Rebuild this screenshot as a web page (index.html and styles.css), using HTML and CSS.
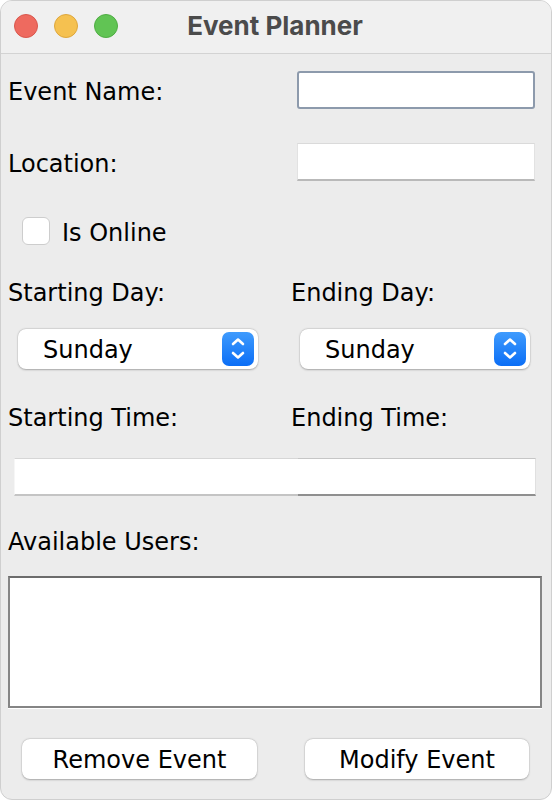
FILE: index.html
```html
<!DOCTYPE html>
<html>
<head>
<meta charset="utf-8">
<link rel="stylesheet" href="styles.css">
</head>
<body>
<div class="window">
  <div class="titlebar">
    <div class="lights">
      <span class="light red"></span>
      <span class="light yellow"></span>
      <span class="light green"></span>
    </div>
    <div class="title">Event Planner</div>
  </div>
  <div class="content">
    <div class="row row-name">
      <div class="label">Event Name:</div>
      <div class="field focused"></div>
    </div>
    <div class="row row-loc">
      <div class="label">Location:</div>
      <div class="field plain"></div>
    </div>
    <div class="row row-check">
      <span class="checkbox"></span>
      <span class="label">Is Online</span>
    </div>
    <div class="row row-labels1">
      <div class="label">Starting Day:</div>
      <div class="label right-label">Ending Day:</div>
    </div>
    <div class="row row-selects">
      <div class="select sel-left">
        <span class="sel-text">Sunday</span>
        <span class="stepper"><svg width="32" height="34" viewBox="0 0 32 34"><path d="M11 12 L16 7.5 L21 12 M11 21 L16 25.5 L21 21" fill="none" stroke="#fff" stroke-width="2.6" stroke-linecap="round" stroke-linejoin="round"/></svg></span>
      </div>
      <div class="select sel-right">
        <span class="sel-text">Sunday</span>
        <span class="stepper"><svg width="32" height="34" viewBox="0 0 32 34"><path d="M11 12 L16 7.5 L21 12 M11 21 L16 25.5 L21 21" fill="none" stroke="#fff" stroke-width="2.6" stroke-linecap="round" stroke-linejoin="round"/></svg></span>
      </div>
    </div>
    <div class="row row-labels2">
      <div class="label">Starting Time:</div>
      <div class="label right-label">Ending Time:</div>
    </div>
    <div class="row row-times">
      <div class="time time-left"></div>
      <div class="time time-right"></div>
    </div>
    <div class="row row-labels3">
      <div class="label">Available Users:</div>
    </div>
    <div class="list"></div>
    <div class="row row-buttons">
      <div class="button btn-left">Remove Event</div>
      <div class="button btn-right">Modify Event</div>
    </div>
  </div>
</div>
</body>
</html>
```
FILE: styles.css
```css
html, body {
  margin: 0;
  padding: 0;
  background: #ffffff;
}
body {
  width: 552px;
  height: 800px;
  overflow: hidden;
}
.window {
  width: 552px;
  height: 800px;
  box-sizing: border-box;
  background: #ececec;
  border-radius: 12px;
  border: 1px solid #cfcfcf;
  overflow: hidden;
  font-family: "DejaVu Sans", sans-serif;
  font-size: 24px;
  color: #000;
}
.titlebar {
  position: relative;
  height: 52px;
  background: #f0f0f0;
  border-bottom: 1px solid #d3d3d3;
  display: flex;
  align-items: center;
  justify-content: center;
}
.lights {
  position: absolute;
  left: 13px;
  top: 13px;
  display: flex;
  gap: 16px;
}
.light {
  width: 24px;
  height: 24px;
  border-radius: 50%;
  box-sizing: border-box;
}
.red { background: #ee6a5f; border: 1px solid #d9574d; }
.yellow { background: #f5c150; border: 1px solid #dea73c; }
.green { background: #61c454; border: 1px solid #4fad43; }
.title {
  font-family: Inter, "Liberation Sans", sans-serif;
  font-weight: 700;
  font-size: 26px;
  color: #4b4b4b;
  margin-top: -4px;
  margin-left: -2px;
}
.content {
  display: flex;
  flex-direction: column;
}
.row {
  display: flex;
  align-items: center;
}
.label {
  line-height: 28px;
  white-space: nowrap;
}
.row-name {
  margin-top: 17px;
  height: 38px;
  padding-left: 7px;
  justify-content: space-between;
  padding-right: 16px;
}
.row-name .label, .row-loc .label { padding-top: 3px; }
.field {
  width: 238px;
  height: 38px;
  box-sizing: border-box;
  background: #fff;
}
.focused {
  border: 2px solid #8d9aac;
  border-radius: 3px;
}
.plain {
  border-top: 1px solid #dadada;
  border-left: 1px solid #e2e2e2;
  border-right: 1px solid #e2e2e2;
  border-bottom: 2px solid #b9b9b9;
}
.row-loc {
  margin-top: 34px;
  height: 38px;
  padding-left: 7px;
  justify-content: space-between;
  padding-right: 16px;
}
.row-check {
  margin-top: 36px;
  height: 28px;
  padding-left: 21px;
  gap: 12px;
}
.row-check .label { padding-top: 4px; }
.checkbox {
  width: 28px;
  height: 28px;
  box-sizing: border-box;
  border: 1px solid #cdcdcd;
  border-radius: 6px;
  background: #fff;
}
.row-labels1 {
  margin-top: 32px;
  height: 28px;
  padding-left: 7px;
  padding-top: 2px;
}
.row-labels1 .label:first-child,
.row-labels2 .label:first-child {
  width: 283px;
}
.row-selects {
  margin-top: 22px;
  height: 40px;
  padding-left: 17px;
  gap: 42px;
}
.select {
  width: 240px;
  height: 40px;
  box-sizing: border-box;
  background: #fff;
  border-radius: 8px;
  box-shadow: 0 0.5px 2px rgba(0,0,0,0.28), 0 0 0 0.5px rgba(0,0,0,0.06);
  display: flex;
  align-items: center;
  justify-content: space-between;
  padding: 0 4px 0 25px;
}
.sel-right { width: 230px; }
.sel-text { padding-top: 2px; }
.stepper {
  width: 32px;
  height: 34px;
  border-radius: 7px;
  background: linear-gradient(#3f9bfd, #0b6ef6);
  display: flex;
}
.row-labels2 {
  margin-top: 33px;
  height: 28px;
  padding-left: 7px;
  padding-top: 2px;
}
.row-times {
  margin-top: 26px;
  height: 38px;
  padding-left: 13px;
}
.time {
  height: 38px;
  box-sizing: border-box;
  background: #fff;
}
.time-left {
  width: 284px;
  border-top: 1px solid #d6d6d6;
  border-left: 1px solid #f6f6f6;
  border-bottom: 2px solid #c4c4c4;
}
.time-right {
  width: 238px;
  border-top: 1px solid #c6c6c6;
  border-right: 1px solid #e0e0e0;
  border-bottom: 2px solid #8f8f8f;
}
.row-labels3 {
  margin-top: 30px;
  height: 28px;
  padding-left: 7px;
  padding-top: 2px;
}
.list {
  margin: 20px 0 0 7px;
  width: 534px;
  height: 132px;
  box-sizing: border-box;
  background: #fff;
  border: 2px solid #858585;
  border-top-color: #6c6c6c;
  box-shadow: 0 1px 0 #ffffff;
}
.row-buttons {
  margin-top: 31px;
  height: 40px;
  padding-left: 21px;
  gap: 48px;
}
.button {
  height: 40px;
  box-sizing: border-box;
  background: #fff;
  border-radius: 8px;
  box-shadow: 0 0.5px 2px rgba(0,0,0,0.28), 0 0 0 0.5px rgba(0,0,0,0.06);
  display: flex;
  align-items: center;
  justify-content: center;
  padding-top: 2px;
}
.btn-left { width: 235px; }
.btn-right { width: 224px; }
```
